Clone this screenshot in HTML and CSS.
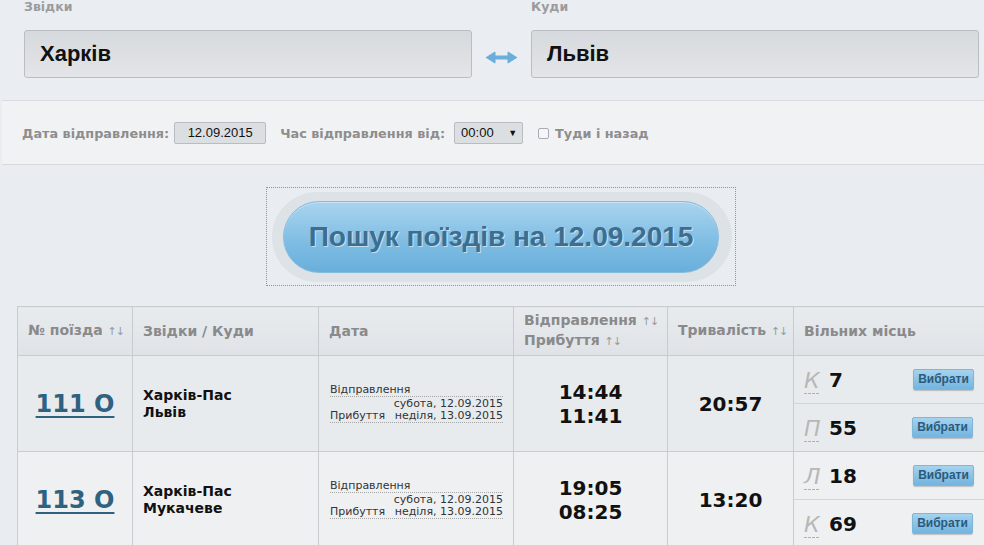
FILE: index.html
```html
<!DOCTYPE html>
<html lang="uk">
<head>
<meta charset="utf-8">
<title>Пошук поїздів</title>
<link rel="stylesheet" href="styles.css">
</head>
<body>
<div class="page">
  <section class="route">
    <div class="field">
      <div class="field-label">Звідки</div>
      <div class="station-input">Харків</div>
    </div>
    <div class="swap">
      <svg width="33" height="13" viewBox="0 0 33 13"><path d="M0.5 6.5 L9.5 0.8 Q10.5 0.3 10.5 1.5 L10.5 4.5 L22.5 4.5 L22.5 1.5 Q22.5 0.3 23.5 0.8 L32.5 6.5 L23.5 12.2 Q22.5 12.7 22.5 11.5 L22.5 8.5 L10.5 8.5 L10.5 11.5 Q10.5 12.7 9.5 12.2 Z" fill="#6aaed9"/></svg>
    </div>
    <div class="field">
      <div class="field-label">Куди</div>
      <div class="station-input">Львів</div>
    </div>
  </section>

  <section class="options">
    <span class="opt-label">Дата відправлення:</span>
    <span class="date-box">12.09.2015</span>
    <span class="opt-label opt-gap">Час відправлення від:</span>
    <span class="select-box">00:00<span class="caret">▼</span></span>
    <span class="check"></span>
    <span class="opt-label">Туди і назад</span>
  </section>

  <section class="search">
    <div class="search-focus">
      <div class="search-halo">
        <div class="search-btn">Пошук поїздів на 12.09.2015</div>
      </div>
    </div>
  </section>

  <table class="trains">
    <colgroup>
      <col class="c1"><col class="c2"><col class="c3"><col class="c4"><col class="c5"><col class="c6">
    </colgroup>
    <thead>
      <tr>
        <th>№ поїзда <span class="sort">↑↓</span></th>
        <th>Звідки / Куди</th>
        <th>Дата</th>
        <th>Відправлення <span class="sort">↑↓</span><br>Прибуття <span class="sort">↑↓</span></th>
        <th>Тривалість <span class="sort">↑↓</span></th>
        <th>Вільних місць</th>
      </tr>
    </thead>
    <tbody>
      <tr class="r1">
        <td class="num"><a href="#">111 О</a></td>
        <td class="stations">Харків-Пас<br>Львів</td>
        <td class="dates">
          <div class="d-line">Відправлення</div>
          <div class="d-right">субота, 12.09.2015</div>
          <div class="d-line d-split"><span>Прибуття</span><span>неділя, 13.09.2015</span></div>
        </td>
        <td class="times">14:44<br>11:41</td>
        <td class="dur">20:57</td>
        <td class="seats">
          <div class="seat"><span class="cls">К</span><span class="cnt">7</span><span class="pick">Вибрати</span></div>
          <div class="seat seat-2"><span class="cls">П</span><span class="cnt">55</span><span class="pick">Вибрати</span></div>
        </td>
      </tr>
      <tr class="r2">
        <td class="num"><a href="#">113 О</a></td>
        <td class="stations">Харків-Пас<br>Мукачеве</td>
        <td class="dates">
          <div class="d-line">Відправлення</div>
          <div class="d-right">субота, 12.09.2015</div>
          <div class="d-line d-split"><span>Прибуття</span><span>неділя, 13.09.2015</span></div>
        </td>
        <td class="times">19:05<br>08:25</td>
        <td class="dur">13:20</td>
        <td class="seats">
          <div class="seat"><span class="cls">Л</span><span class="cnt">18</span><span class="pick">Вибрати</span></div>
          <div class="seat seat-2"><span class="cls">К</span><span class="cnt">69</span><span class="pick">Вибрати</span></div>
        </td>
      </tr>
    </tbody>
  </table>
</div>
</body>
</html>
```

FILE: styles.css
```css
html, body {
  margin: 0;
  padding: 0;
}
body {
  background: #e9edf1;
  width: 984px;
  height: 545px;
  overflow: hidden;
  font-family: "Liberation Sans", Arial, sans-serif;
}
.page {
  width: 984px;
}

/* route */
.route {
  display: flex;
  height: 100px;
  padding-left: 24px;
  box-sizing: border-box;
  background: #eaedf1;
}
.field {
  width: 448px;
}
.field-label {
  font-family: "DejaVu Sans", Verdana, sans-serif;
  font-size: 12.5px;
  line-height: 14px;
  font-weight: bold;
  color: #9b9b9b;
}
.station-input {
  margin-top: 16px;
  height: 48px;
  box-sizing: border-box;
  border: 1px solid #babdc1;
  border-radius: 3px;
  background: linear-gradient(#d6d9dd, #e3e5e8);
  padding-left: 15px;
  font-size: 22px;
  font-weight: bold;
  line-height: 46px;
  color: #111;
}
.swap {
  width: 59px;
  display: flex;
  justify-content: center;
  padding-top: 51px;
  box-sizing: border-box;
}

/* options */
.options {
  margin-left: 2px;
  height: 65px;
  box-sizing: border-box;
  border-top: 1px solid #d8dce0;
  border-bottom: 1px solid #d5d9dd;
  background: #f1f2f4;
  display: flex;
  align-items: center;
  padding-left: 20px;
  padding-top: 1px;
}
.opt-label {
  font-family: "DejaVu Sans", Verdana, sans-serif;
  font-size: 12.8px;
  font-weight: bold;
  color: #8d8d8d;
}
.opt-gap {
  margin-left: 14px;
}
.date-box {
  margin-left: 5px;
  width: 92px;
  height: 22px;
  box-sizing: border-box;
  border: 1px solid #b9bcc0;
  border-radius: 2px;
  background: #dcdfe2;
  font-size: 13px;
  line-height: 20px;
  text-align: center;
  color: #111;
}
.select-box {
  margin-left: 9px;
  width: 69px;
  height: 22px;
  box-sizing: border-box;
  border: 1px solid #b9bcc0;
  border-radius: 2px;
  background: #dcdfe2;
  font-size: 13px;
  line-height: 20px;
  color: #111;
  padding-left: 6px;
  display: flex;
  justify-content: space-between;
  padding-right: 5px;
}
.caret {
  font-size: 9px;
}
.check {
  margin-left: 15px;
  margin-right: 6px;
  width: 11px;
  height: 11px;
  box-sizing: border-box;
  border: 1px solid #a9acb0;
  border-radius: 2px;
  background: #f4f5f6;
}

/* search button */
.search {
  display: flex;
  justify-content: center;
  padding: 22px 0 20px 18px;
}
.search-focus {
  border: 1px dotted #8e8ec4;
  padding: 4px 3px 3px 5px;
}
.search-halo {
  width: 460px;
  height: 90px;
  box-sizing: border-box;
  border-radius: 45px;
  background: #dde2e7;
  padding: 9px 13px 9px 11px;
}
.search-btn {
  height: 72px;
  box-sizing: border-box;
  border: 1px solid #86bbdc;
  border-radius: 36px;
  background: linear-gradient(#a9d4ee, #7dbce3 60%, #69afdb);
  box-shadow: inset 0 1px 0 rgba(255,255,255,0.35);
  text-align: center;
  font-size: 28px;
  font-weight: bold;
  line-height: 70px;
  color: #3d6e8f;
  text-shadow: 1px 1px 0 rgba(255,255,255,0.55);
}

/* table */
.trains {
  margin-left: 17px;
  border-collapse: collapse;
  table-layout: fixed;
  width: 980px;
  font-family: "DejaVu Sans", Verdana, sans-serif;
}
.c1 { width: 115px; }
.c2 { width: 186px; }
.c3 { width: 195px; }
.c4 { width: 154px; }
.c5 { width: 126px; }
.c6 { width: 204px; }
.trains th, .trains td {
  border: 1px solid #c9cccf;
  padding: 0;
}
.trains th {
  height: 48px;
  background: linear-gradient(#e8ebee, #dfe3e7);
  text-align: left;
  padding-left: 10px;
  font-size: 14px;
  line-height: 18px;
  font-weight: bold;
  color: #8a8a8a;
  vertical-align: middle;
}
.sort {
  font-family: "DejaVu Sans", sans-serif;
  font-weight: normal;
  color: #9a9a9a;
  font-size: 11px;
  letter-spacing: -1px;
}
.trains td {
  height: 95px;
  vertical-align: middle;
}
.r1 td { background: #e8ebee; }
.r2 td { background: #eff0f2; }
.num {
  text-align: center;
}
.num a {
  font-size: 24px;
  font-weight: bold;
  color: #2f6180;
  text-decoration: underline;
  text-underline-offset: 4px;
  text-decoration-thickness: 2px;
}
.stations {
  padding-left: 10px !important;
  font-size: 14px;
  line-height: 17px;
  font-weight: bold;
  color: #111;
}
.dates {
  padding: 0 10px 0 11px !important;
  font-size: 11px;
  color: #333;
}
.d-line {
  line-height: 12px;
  border-bottom: 1px dotted #a6a6a6;
}
.d-right {
  line-height: 13px;
  text-align: right;
}
.d-split {
  display: flex;
  justify-content: space-between;
}
.times, .dur {
  text-align: center;
  font-size: 20px;
  font-weight: bold;
  line-height: 24px;
  color: #111;
}
.seats {
  padding: 0 !important;
  vertical-align: top !important;
}
.seat {
  width: 180px;
  height: 47px;
  box-sizing: border-box;
  display: flex;
  align-items: center;
  padding-left: 10px;
}
.seat-2 {
  height: 48px;
  width: auto;
  border-top: 1px solid #d2d5d8;
}
.seat-2 .pick { margin-right: 24px; }
.cls {
  font-style: italic;
  font-size: 22px;
  line-height: 22px;
  color: #b7b7b7;
  border-bottom: 1px dashed #b0b0b0;
  padding-bottom: 1px;
  margin-top: 4px;
  width: 15px;
}
.cnt {
  margin-left: 10px;
  font-size: 20px;
  font-weight: bold;
  color: #111;
}
.pick {
  margin-left: auto;
  width: 61px;
  height: 21px;
  box-sizing: border-box;
  border: 1px solid #82b6d6;
  border-radius: 2px;
  background: linear-gradient(#a5d3ef, #73b4de);
  box-shadow: 0 1px 1px rgba(0,0,0,0.2);
  font-family: "Liberation Sans", Arial, sans-serif;
  font-size: 12px;
  font-weight: bold;
  line-height: 19px;
  text-align: center;
  color: #2c5a7b;
}
```
